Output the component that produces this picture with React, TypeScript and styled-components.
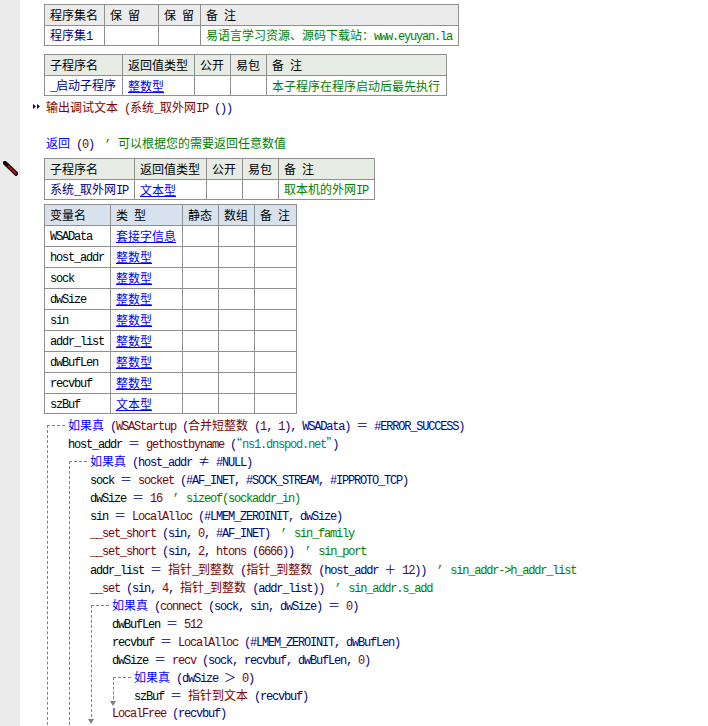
import React from 'react';
import styled, { createGlobalStyle } from 'styled-components';

const GlobalStyle = createGlobalStyle`
  html, body {
    margin: 0;
    padding: 0;
    background: #fff;
  }
`;

const Page = styled.div`
  display: flex;
  width: 708px;
  height: 726px;
  overflow: hidden;
  background: #fff;
  color: #000;
  font-family: "Liberation Mono", monospace;
`;

const Gutter = styled.aside`
  flex: 0 0 20px;
  background: #ebebeb;
  padding: 161px 0 0 3px;
  box-sizing: border-box;
`;

const Main = styled.main`
  flex: 1;
  padding: 4px 0 0 24px;
  min-width: 0;
`;

const InfoTable = styled.table<{ $after?: number; $width: number }>`
  border-collapse: collapse;
  table-layout: fixed;
  width: ${p => p.$width}px;
  margin-bottom: ${p => p.$after ?? 0}px;

  td, th {
    border: 1px solid #8f8f8f;
    height: 21px;
    padding: 0 0 0 5px;
    box-sizing: border-box;
    font-weight: normal;
    text-align: left;
    white-space: nowrap;
    overflow: hidden;
    line-height: 16px;
  }

  th {
    padding-top: 1px;
  }

  tbody tr:last-child td {
    height: 20px;
    padding-top: 1px;
  }
`;

const Col = styled.col<{ $w: number }>`
  width: ${p => p.$w}px;
`;

const Head = styled.th<{ $kind: 'gray' | 'green' | 'blue' }>`
  background: ${p => ({ gray: '#ebebeb', green: '#e6ece4', blue: '#d8e2ee' }[p.$kind])};
`;

const Link = styled.span`
  color: #0000ff;
  text-decoration: underline;
`;

const Code = styled.div`
  white-space: pre;
`;

const Line = styled.div`
  position: relative;
  height: 18px;
  line-height: 18px;
  white-space: pre;
`;

const TopLine = styled(Line)<{ $above?: number; $below?: number }>`
  margin: ${p => p.$above ?? 0}px 0 ${p => p.$below ?? 0}px 2px;
`;

const RunMark = styled.svg`
  position: absolute;
  left: -13px;
  top: 6px;
`;

const IfBlock = styled.div<{ $left: number }>`
  position: relative;
  margin-left: ${p => p.$left}px;
  padding-left: 21px;

  &::before {
    content: '';
    position: absolute;
    left: 0;
    top: 9px;
    bottom: 0;
    border-left: 1px dashed #808080;
  }
`;

const ClosedBlock = styled(IfBlock)`
  &::after {
    content: '';
    position: absolute;
    left: -3px;
    bottom: -2px;
    border-left: 3.5px solid transparent;
    border-right: 3.5px solid transparent;
    border-top: 5px solid #808080;
  }
`;

const IfHead = styled(Line)`
  &::before {
    content: '';
    position: absolute;
    left: -21px;
    width: 18px;
    top: 9px;
    border-top: 1px dashed #808080;
  }
`;

const tones = {
  plain: '#000000',
  kw: '#0000ff',
  fn: '#800000',
  pn: '#000080',
  cm: '#008000',
  st: '#008080',
};

const Tone = styled.span<{ $t: keyof typeof tones }>`
  color: ${p => tones[p.$t]};
`;

const Latin = styled.span`
  font-size: 12px;
  letter-spacing: -1.2px;
`;

const Han = styled.span`
  font-family: "Noto Sans CJK SC", sans-serif;
  font-size: 12px;
`;

// the comment mark sits in a full-width box, right of centre
const Tick = styled.span`
  display: inline-block;
  width: 12px;
  padding-left: 4px;
  box-sizing: border-box;
  color: #008000;
  font-size: 12px;
  letter-spacing: -1.2px;
`;

// SimSun look: half-width latin next to 12px full-width han
const HAN_RE = /([\u2010-\u2027\u2260\u3000-\u9fff\uff00-\uffef]+)/;

function Txt({ children }: { children: string }) {
  return (
    <>
      {children.split(HAN_RE).map((part, i) =>
        part === '' ? null : i % 2 ? <Han key={i}>{part}</Han> : <Latin key={i}>{part}</Latin>
      )}
    </>
  );
}

function S({ t = 'plain', children }: { t?: keyof typeof tones; children: string }) {
  return (
    <Tone $t={t}>
      <Txt>{children}</Txt>
    </Tone>
  );
}

interface Cell {
  text?: string;
  tone?: keyof typeof tones;
  link?: boolean;
}

function Grid({ kind, widths, head, rows, after }: {
  kind: 'gray' | 'green' | 'blue';
  widths: number[];
  head: string[];
  rows: Cell[][];
  after?: number;
}) {
  return (
    <InfoTable $after={after} $width={widths.reduce((a, b) => a + b, 0) + 1}>
      <colgroup>
        {widths.map((w, i) => <Col key={i} $w={w} />)}
      </colgroup>
      <thead>
        <tr>
          {head.map((h, i) => <Head key={i} $kind={kind}><Txt>{h}</Txt></Head>)}
        </tr>
      </thead>
      <tbody>
        {rows.map((row, r) => (
          <tr key={r}>
            {row.map((c, i) => (
              <td key={i}>
                {c.text ? (c.link ? <Link><Txt>{c.text}</Txt></Link> : <S t={c.tone}>{c.text}</S>) : null}
              </td>
            ))}
          </tr>
        ))}
      </tbody>
    </InfoTable>
  );
}

const vars: [string, string][] = [
  ['WSAData', '套接字信息'],
  ['host_addr', '整数型'],
  ['sock', '整数型'],
  ['dwSize', '整数型'],
  ['sin', '整数型'],
  ['addr_list', '整数型'],
  ['dwBufLen', '整数型'],
  ['recvbuf', '整数型'],
  ['szBuf', '文本型'],
];

function Pencil() {
  return (
    <svg width="15" height="15" viewBox="0 0 15 15">
      <path d="M2 2 L13 12.6" stroke="#000" strokeWidth="4.2" strokeLinecap="square" />
      <path d="M4.5 4.6 L13.6 13.3" stroke="#d80000" strokeWidth="2" />
    </svg>
  );
}

export default function App() {
  return (
    <Page>
      <GlobalStyle />
      <Gutter>
        <Pencil />
      </Gutter>
      <Main>
        <Grid
          kind="gray"
          after={8}
          widths={[60, 54, 42, 258]}
          head={['程序集名', '保 留', '保 留', '备 注']}
          rows={[[
            { text: '程序集1', tone: 'pn' },
            {},
            {},
            { text: '易语言学习资源、源码下载站：www.eyuyan.la', tone: 'cm' },
          ]]}
        />
        <Grid
          kind="green"
          widths={[78, 72, 36, 36, 180]}
          head={['子程序名', '返回值类型', '公开', '易包', '备 注']}
          rows={[[
            { text: '_启动子程序', tone: 'pn' },
            { text: '整数型', link: true },
            {},
            {},
            { text: '本子程序在程序启动后最先执行', tone: 'cm' },
          ]]}
        />
        <TopLine $above={2} $below={18}>
          <RunMark width="7" height="5" viewBox="0 0 7 5">
            <path d="M0 0 L3 2.5 L0 5 Z M4 0 L7 2.5 L4 5 Z" fill="#000080" />
          </RunMark>
          <S t="fn">输出调试文本 (系统_取外网IP </S><S t="pn">())</S>
        </TopLine>
        <TopLine $below={6}>
          <S t="kw">返回</S><S t="pn"> (</S><S t="fn">0</S><S t="pn">) </S><Tick>’</Tick><S t="cm"> 可以根据您的需要返回任意数值</S>
        </TopLine>
        <Grid
          kind="green"
          after={4}
          widths={[90, 72, 36, 36, 96]}
          head={['子程序名', '返回值类型', '公开', '易包', '备 注']}
          rows={[[
            { text: '系统_取外网IP', tone: 'pn' },
            { text: '文本型', link: true },
            {},
            {},
            { text: '取本机的外网IP', tone: 'cm' },
          ]]}
        />
        <Grid
          kind="blue"
          after={2}
          widths={[66, 72, 36, 36, 42]}
          head={['变量名', '类 型', '静态', '数组', '备 注']}
          rows={vars.map(([name, type]) => [
            { text: name },
            { text: type, link: true },
            {},
            {},
            {},
          ])}
        />
        <Code>
          <IfBlock $left={3}>
            <IfHead>
              <S t="kw">如果真</S><S t="pn"> (</S><S t="fn">WSAStartup </S><S t="pn">(</S><S t="fn">合并短整数 </S><S t="pn">(</S><S t="fn">1</S><S t="pn">, </S><S t="fn">1</S><S t="pn">), WSAData) ＝ #ERROR_SUCCESS)</S>
            </IfHead>
            <Line>
              <S>host_addr </S><S t="pn">＝ </S><S t="fn">gethostbyname </S><S t="pn">(</S><S t="st">“ns1.dnspod.net”</S><S t="pn">)</S>
            </Line>
            <IfBlock $left={1}>
              <IfHead>
                <S t="kw">如果真</S><S t="pn"> (host_addr ≠ #NULL)</S>
              </IfHead>
              <Line>
                <S>sock </S><S t="pn">＝ </S><S t="fn">socket </S><S t="pn">(#AF_INET, #SOCK_STREAM, #IPPROTO_TCP)</S>
              </Line>
              <Line>
                <S>dwSize </S><S t="pn">＝ </S><S t="fn">16 </S><Tick>’</Tick><S t="cm"> sizeof(sockaddr_in)</S>
              </Line>
              <Line>
                <S>sin </S><S t="pn">＝ </S><S t="fn">LocalAlloc </S><S t="pn">(#LMEM_ZEROINIT, dwSize)</S>
              </Line>
              <Line>
                <S t="fn">__set_short </S><S t="pn">(sin, </S><S t="fn">0</S><S t="pn">, #AF_INET) </S><Tick>’</Tick><S t="cm"> sin_family</S>
              </Line>
              <Line>
                <S t="fn">__set_short </S><S t="pn">(sin, </S><S t="fn">2</S><S t="pn">, </S><S t="fn">htons </S><S t="pn">(</S><S t="fn">6666</S><S t="pn">)) </S><Tick>’</Tick><S t="cm"> sin_port</S>
              </Line>
              <Line>
                <S>addr_list </S><S t="pn">＝ </S><S t="fn">指针_到整数 </S><S t="pn">(</S><S t="fn">指针_到整数 </S><S t="pn">(host_addr ＋ </S><S t="fn">12</S><S t="pn">)) </S><Tick>’</Tick><S t="cm"> sin_addr-&gt;h_addr_list</S>
              </Line>
              <Line>
                <S t="fn">__set </S><S t="pn">(sin, </S><S t="fn">4</S><S t="pn">, </S><S t="fn">指针_到整数 </S><S t="pn">(addr_list)) </S><Tick>’</Tick><S t="cm"> sin_addr.s_add</S>
              </Line>
              <ClosedBlock $left={1}>
                <IfHead>
                  <S t="kw">如果真</S><S t="pn"> (</S><S t="fn">connect </S><S t="pn">(sock, sin, dwSize) ＝ </S><S t="fn">0</S><S t="pn">)</S>
                </IfHead>
                <Line>
                  <S>dwBufLen </S><S t="pn">＝ </S><S t="fn">512</S>
                </Line>
                <Line>
                  <S>recvbuf </S><S t="pn">＝ </S><S t="fn">LocalAlloc </S><S t="pn">(#LMEM_ZEROINIT, dwBufLen)</S>
                </Line>
                <Line>
                  <S>dwSize </S><S t="pn">＝ </S><S t="fn">recv </S><S t="pn">(sock, recvbuf, dwBufLen, </S><S t="fn">0</S><S t="pn">)</S>
                </Line>
                <ClosedBlock $left={1}>
                  <IfHead>
                    <S t="kw">如果真</S><S t="pn"> (dwSize ＞ </S><S t="fn">0</S><S t="pn">)</S>
                  </IfHead>
                  <Line>
                    <S>szBuf </S><S t="pn">＝ </S><S t="fn">指针到文本 </S><S t="pn">(recvbuf)</S>
                  </Line>
                </ClosedBlock>
                <Line>
                  <S t="fn">LocalFree </S><S t="pn">(recvbuf)</S>
                </Line>
              </ClosedBlock>
              <Line>
                <S t="fn">LocalFree </S><S t="pn">(sin)</S>
              </Line>
            </IfBlock>
          </IfBlock>
        </Code>
      </Main>
    </Page>
  );
}
